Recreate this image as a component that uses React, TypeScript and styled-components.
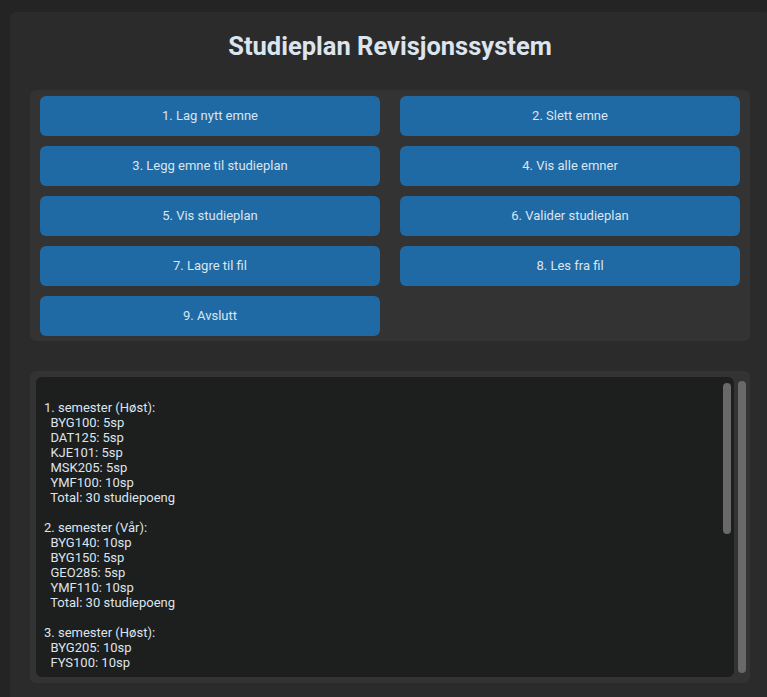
import React from "react";
import styled, { createGlobalStyle } from "styled-components";

const GlobalStyle = createGlobalStyle`
  html, body {
    margin: 0;
    padding: 0;
    background: #242424;
    overflow: hidden;
    width: 767px;
    height: 697px;
  }
  * { box-sizing: border-box; }
`;

const Page = styled.div`
  padding: 12px 0 0 10px;
  font-family: Roboto, "Liberation Sans", sans-serif;
  color: #dce4ee;
`;

const MainFrame = styled.div`
  width: 760px;
  background: #2b2b2b;
  border-radius: 6px;
  padding: 0 20px 20px;
  display: flex;
  flex-direction: column;
`;

const Title = styled.h1`
  margin: 19px 0 29px;
  font-size: 25.5px;
  line-height: 30px;
  font-weight: 700;
  text-align: center;
  color: #dce4ee;
`;

const ButtonPanel = styled.div`
  background: #333333;
  border-radius: 6px;
  padding: 6px 10px 5px;
  display: grid;
  grid-template-columns: 1fr 1fr;
  column-gap: 20px;
  row-gap: 10px;
`;

const MenuButton = styled.button`
  height: 40px;
  border: none;
  border-radius: 6px;
  background: #1f6aa5;
  color: #dce4ee;
  font-family: Roboto, "Liberation Sans", sans-serif;
  font-size: 13px;
  padding: 0 0 2px;
  cursor: pointer;
`;

const OutputPanel = styled.div`
  margin-top: 30px;
  height: 312px;
  background: #333333;
  border-radius: 6px;
  padding: 6px 4px 6px 6px;
  display: flex;
  gap: 4px;
`;

const TextBox = styled.div`
  flex: 1;
  background: #1d1e1e;
  border-radius: 6px;
  display: flex;
  padding: 6px 3px 0 8px;
`;

const TextContent = styled.pre`
  flex: 1;
  margin: 2px 0 0;
  height: 285px;
  overflow: hidden;
  font-family: Roboto, "Liberation Sans", sans-serif;
  font-size: 13px;
  line-height: 15px;
  color: #dce4ee;
  white-space: pre;
`;

const ScrollTrack = styled.div<{ $top: number; $bottom?: number }>`
  width: 8px;
  display: flex;
  flex-direction: column;
  padding-top: ${(p) => p.$top}px;
  padding-bottom: ${(p) => p.$bottom ?? 0}px;
`;

const ScrollThumb = styled.div<{ $height?: number }>`
  width: 8px;
  border-radius: 4px;
  background: #696969;
  ${(p) => (p.$height ? `height: ${p.$height}px;` : "flex: 1;")}
`;

const buttons = [
  "1. Lag nytt emne",
  "2. Slett emne",
  "3. Legg emne til studieplan",
  "4. Vis alle emner",
  "5. Vis studieplan",
  "6. Valider studieplan",
  "7. Lagre til fil",
  "8. Les fra fil",
  "9. Avslutt",
];

const output = [
  "",
  "1. semester (Høst):",
  "  BYG100: 5sp",
  "  DAT125: 5sp",
  "  KJE101: 5sp",
  "  MSK205: 5sp",
  "  YMF100: 10sp",
  "  Total: 30 studiepoeng",
  "",
  "2. semester (Vår):",
  "  BYG140: 10sp",
  "  BYG150: 5sp",
  "  GEO285: 5sp",
  "  YMF110: 10sp",
  "  Total: 30 studiepoeng",
  "",
  "3. semester (Høst):",
  "  BYG205: 10sp",
  "  FYS100: 10sp",
].join("\n");

export default function App() {
  return (
    <>
      <GlobalStyle />
      <Page>
        <MainFrame>
          <Title>Studieplan Revisjonssystem</Title>
          <ButtonPanel>
            {buttons.map((b) => (
              <MenuButton key={b}>{b}</MenuButton>
            ))}
          </ButtonPanel>
          <OutputPanel>
            <TextBox>
              <TextContent>{output}</TextContent>
              <ScrollTrack $top={0}>
                <ScrollThumb $height={151} />
              </ScrollTrack>
            </TextBox>
            <ScrollTrack $top={4} $bottom={4}>
              <ScrollThumb />
            </ScrollTrack>
          </OutputPanel>
        </MainFrame>
      </Page>
    </>
  );
}
